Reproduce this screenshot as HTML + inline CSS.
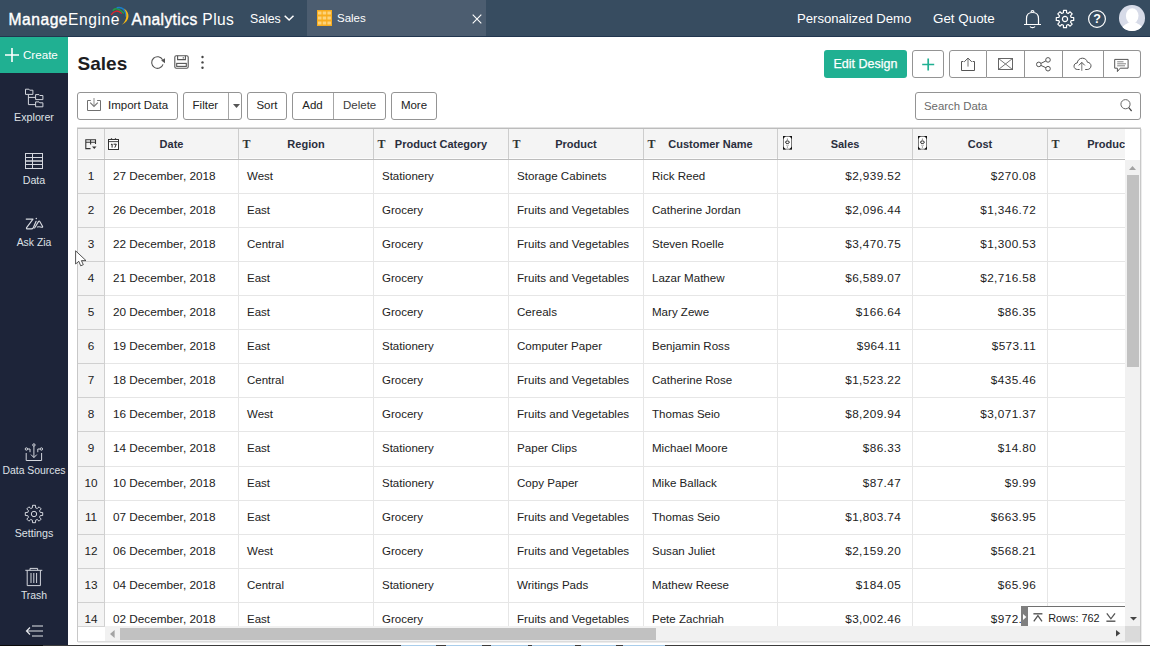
<!DOCTYPE html>
<html>
<head>
<meta charset="utf-8">
<title>Sales</title>
<style>
*{box-sizing:border-box;margin:0;padding:0}
html,body{width:1150px;height:646px;overflow:hidden;background:#fff;font-family:"Liberation Sans",sans-serif;color:#222;}
body{position:relative}
.abs{position:absolute}
svg{display:block;overflow:visible}
#topbar{position:absolute;left:0;top:0;width:1150px;height:37px;background:#374c60;border-bottom:1px solid #22364f}
#topbar .t{position:absolute;color:#fff;white-space:nowrap}
.sb{-webkit-text-stroke:.4px #fff}
#tab{position:absolute;left:307px;top:0;width:179px;height:36px;background:#4c5d70;}
#side{position:absolute;left:0;top:37px;width:68px;height:609px;background:#1d2439;}
#create{position:absolute;left:0;top:0;width:68px;height:36px;background:#20b092;color:#fff;}
.nav{position:absolute;left:0;width:68px;text-align:center;color:#dfe1e6;font-size:10.7px;white-space:nowrap;line-height:12px}
.sico{position:absolute}
.btn{position:absolute;top:92px;height:28px;border:1px solid #949494;border-radius:3px;background:#fff;font-size:11.5px;color:#222;line-height:25px;text-align:center;white-space:nowrap}
.ibtn{position:absolute;top:50px;height:28px;border:1px solid #949494;background:#fff;}
#grid{position:absolute;left:77px;top:128px;width:1064px;height:514px;border:1px solid #c8c8c8;border-top-color:#bcbcbc;border-bottom-color:#dcdcdc;background:#fff;box-shadow:1px 1px 0 #ececec,0 -1px 0 #e0e0e0}
#gin{position:absolute;left:0;top:0;width:1047px;height:497px;overflow:hidden}
.hrow{position:absolute;left:0;top:0;height:31px;width:1048px;background:#f4f4f4;border-bottom:1px solid #bcbcbc;box-shadow:inset 0 -1px 0 #fcfcfc}
.hc{position:absolute;top:0;height:30px;border-right:1px solid #cdcdcd;font-weight:bold;font-size:11px;line-height:30px;text-align:center;color:#2a2e3d;white-space:nowrap;overflow:hidden}
.hc .ti{position:absolute;left:3.5px;top:0;font-family:"Liberation Serif",serif;font-weight:bold;font-size:12px;color:#333}
.hc .hi{position:absolute}
.row{position:absolute;left:0;width:1048px;border-bottom:1px solid #e6e6e6;font-size:11.75px;line-height:32px;color:#222;background:#fff}
.c{position:absolute;top:0;bottom:0;border-right:1px solid #e6e6e6;white-space:nowrap;overflow:hidden}
.c.n{left:0;width:27px;background:#f4f4f4;text-align:center;border-right:1px solid #d0d0d0;bottom:-1px;border-bottom:1px solid #d0d0d0}
.c.l{padding-left:8px}
.c.r{text-align:right;padding-right:10.9px;letter-spacing:.4px}
</style>
</head>
<body>
<div id="topbar">
  <div class="t" style="left:8.4px;top:11.4px;font-size:15.6px;line-height:18px;letter-spacing:.56px"><span class="sb">Manage</span>Engine</div>
  <svg class="abs" style="left:110px;top:6px" width="20" height="20" viewBox="0 0 20 20" fill="none">
    <path d="M1.1 8.8Q6 2.1 11.7 7.4" stroke="#e0242b" stroke-width="1.4"/>
    <path d="M2.8 4.6Q6.2 -.3 14 7.6" stroke="#21a046" stroke-width="1.4"/>
    <path d="M6.7 1.8C12 .2 16 4 16.2 10.7" stroke="#1b7fc8" stroke-width="1.5"/>
    <path d="M14 2.4C20.8 7 19.8 15 11.7 18.8C16.8 14.5 18 8 14 2.4Z" fill="#f6b915"/>
  </svg>
  <div class="t" style="left:131.6px;top:11.4px;font-size:15.6px;line-height:18px;letter-spacing:.4px"><span class="sb">Analytics</span> Plus</div>
  <div class="t" style="left:250px;top:10px;font-size:12.3px;line-height:18px;">Sales</div>
  <svg class="abs" style="left:284px;top:15px" width="11" height="7" viewBox="0 0 11 7" fill="none"><path d="M0.7 0.8 L5.1 5 L9.5 0.8" stroke="#fff" stroke-width="1.5"/></svg>
  <div id="tab">
    <svg class="abs" style="left:10px;top:10px" width="15" height="16" viewBox="0 0 15 16"><rect width="15" height="16" fill="#f8ac1e"/><g fill="#fcd37c"><rect x="1" y="1.5" width="3.5" height="3"/><rect x="5.7" y="1.5" width="3.5" height="3"/><rect x="10.4" y="1.5" width="3.5" height="3"/><rect x="1" y="6.5" width="3.5" height="3"/><rect x="5.7" y="6.5" width="3.5" height="3"/><rect x="10.4" y="6.5" width="3.5" height="3"/><rect x="1" y="11.5" width="3.5" height="3"/><rect x="5.7" y="11.5" width="3.5" height="3"/><rect x="10.4" y="11.5" width="3.5" height="3"/></g></svg>
    <div class="t" style="left:30px;top:10px;font-size:11.5px;line-height:16px;">Sales</div>
    <svg class="abs" style="left:165px;top:14px" width="10" height="10" viewBox="0 0 10 10"><path d="M0.7 0.7L9.3 9.3M9.3 0.7L0.7 9.3" stroke="#fff" stroke-width="1.1"/></svg>
  </div>
  <div class="t" style="left:797px;top:10px;font-size:13.1px;line-height:18px;">Personalized Demo</div>
  <div class="t" style="left:933px;top:10px;font-size:13.4px;line-height:18px;">Get Quote</div>
  <!-- bell -->
  <svg class="abs" style="left:1023px;top:9px" width="19" height="20" viewBox="0 0 19 20" fill="none" stroke="#fff" stroke-width="1.2"><path d="M1 15.5 H18 M3.5 15.5 V9.5 C3.5 5.5 6 3.5 9.5 3.5 C13 3.5 15.5 5.5 15.5 9.5 V15.5"/><path d="M8 3.4 C8 1 11 1 11 3.4"/><path d="M7 17.5 C8 19 11 19 12 17.5"/></svg>
  <!-- gear -->
  <svg class="abs" style="left:1056px;top:10px" width="18" height="18" viewBox="-9 -9 18 18" fill="none" stroke="#fff" stroke-width="1.2"><path stroke-linejoin="round" d="M-1.6,-6.2 L-1.5,-8.7 L1.5,-8.7 L1.6,-6.2 L3.2,-5.5 L5.1,-7.2 L7.2,-5.1 L5.5,-3.2 L6.2,-1.6 L8.7,-1.5 L8.7,1.5 L6.2,1.6 L5.5,3.2 L7.2,5.1 L5.1,7.2 L3.2,5.5 L1.6,6.2 L1.5,8.7 L-1.5,8.7 L-1.6,6.2 L-3.2,5.5 L-5.1,7.2 L-7.2,5.1 L-5.5,3.2 L-6.2,1.6 L-8.7,1.5 L-8.7,-1.5 L-6.2,-1.6 L-5.5,-3.2 L-7.2,-5.1 L-5.1,-7.2 L-3.2,-5.5 Z"/><circle r="2.6"/></svg>
  <!-- help -->
  <svg class="abs" style="left:1088px;top:10px" width="18" height="18" viewBox="0 0 18 18" fill="none"><circle cx="9" cy="9" r="8.4" stroke="#fff" stroke-width="1.2"/><text x="9" y="13.3" font-family="Liberation Sans" font-weight="bold" font-size="12.5" fill="#fff" text-anchor="middle">?</text></svg>
  <!-- avatar -->
  <div class="abs" style="left:1119.4px;top:5px;width:25.6px;height:25.6px;border-radius:50%;overflow:hidden;background:#d7dbe8"><svg class="abs" style="left:0;top:0" width="26" height="26" viewBox="0 0 26 26"><g fill="#fff"><ellipse cx="13.2" cy="10.8" rx="6.3" ry="7.6"/><path d="M2 27C2 20.5 7 19.6 9.6 17.5H17C19.6 19.6 24.6 20.5 24.6 27z"/></g></svg></div>
</div>

<div id="side">
  <div id="create">
    <svg class="abs" style="left:5px;top:11px" width="14" height="14" viewBox="0 0 14 14"><path d="M7 0V14M0 7H14" stroke="#fff" stroke-width="1.6"/></svg>
    <span class="abs" style="left:23px;top:11px;font-size:11.6px;line-height:14px">Create</span>
  </div>
</div>
<!-- sidebar icons in page coords -->
<!-- explorer -->
<svg class="abs" style="left:24px;top:88px" width="20" height="20" viewBox="0 0 20 20" fill="none" stroke="#d3d6dd" stroke-width="1"><path d="M1.5 6.4V1.2H4.9L5.7 2.2H8.9V6.4Z" stroke-linejoin="round"/><path d="M11.6 11.6V6.6H15L15.8 7.5H18.9V11.6Z" stroke-linejoin="round"/><path d="M11.6 18.8V13.9H15L15.8 14.8H18.9V18.8Z" stroke-linejoin="round"/><path d="M4.4 6.4V16.6H11.6M4.4 9.4H11.6"/></svg>
<div class="nav" style="top:110.6px">Explorer</div>
<!-- data -->
<svg class="abs" style="left:24px;top:152px" width="20" height="18" viewBox="0 0 20 18" fill="none" stroke="#d3d6dd" stroke-width="1"><rect x="1.5" y="1.5" width="17" height="15"/><path d="M8.5 1.5V16.5M1.5 5.5H18.5M1.5 12.5H18.5"/><path d="M1.5 9H18.5" stroke-width="1.5"/></svg>
<div class="nav" style="top:174px">Data</div>
<!-- zia -->
<svg class="abs" style="left:24px;top:215px" width="20" height="16" viewBox="0 0 20 16" fill="none" stroke="#d8dbe1" stroke-width="1.15" stroke-linecap="round" stroke-linejoin="round"><path d="M2.2 4.1H9L2.6 12.6Q2 13.9 3.6 13.9H7.4Q8.6 13.9 9.4 12.6L12.1 6.3"/><path d="M10.6 13L14.6 6.4Q15.2 5.6 15.8 6.5L18.5 11.2Q19 12.4 17.8 12.2Q15 11.4 13.4 12"/><circle cx="12.3" cy="3.5" r=".75" fill="#d3d6dd" stroke="none"/></svg>
<div class="nav" style="top:237px;font-size:10.4px">Ask Zia</div>
<!-- data sources -->
<svg class="abs" style="left:24px;top:442.7px" width="20" height="19" viewBox="0 0 20 19" fill="none" stroke="#d3d6dd" stroke-width="1"><path d="M2.2 10V17.5H17.6V10"/><path d="M9.9 3.2V14.4M7 11.6L9.9 14.6L12.8 11.6"/><circle cx="9.9" cy="2" r="1.2"/><circle cx="2.4" cy="6" r="1.2"/><circle cx="17.4" cy="6" r="1.2"/><path d="M3.6 6H6V9.2M16.2 6H13.8V9.2"/></svg>
<div class="nav" style="top:464.5px;font-size:10.4px">Data Sources</div>
<!-- settings -->
<svg class="abs" style="left:24.8px;top:505.2px" width="18" height="18" viewBox="-9 -9 18 18" fill="none" stroke="#d3d6dd" stroke-width="1"><path stroke-linejoin="round" d="M-1.6,-6.2 L-1.5,-8.7 L1.5,-8.7 L1.6,-6.2 L3.2,-5.5 L5.1,-7.2 L7.2,-5.1 L5.5,-3.2 L6.2,-1.6 L8.7,-1.5 L8.7,1.5 L6.2,1.6 L5.5,3.2 L7.2,5.1 L5.1,7.2 L3.2,5.5 L1.6,6.2 L1.5,8.7 L-1.5,8.7 L-1.6,6.2 L-3.2,5.5 L-5.1,7.2 L-7.2,5.1 L-5.5,3.2 L-6.2,1.6 L-8.7,1.5 L-8.7,-1.5 L-6.2,-1.6 L-5.5,-3.2 L-7.2,-5.1 L-5.1,-7.2 L-3.2,-5.5 Z"/><circle r="2.7"/></svg>
<div class="nav" style="top:526.7px">Settings</div>
<!-- trash -->
<svg class="abs" style="left:24px;top:567px" width="20" height="20" viewBox="0 0 20 20" fill="none" stroke="#d3d6dd" stroke-width="1"><path d="M1.3 3.3H18.3M6 3.3V1.4H13.6V3.3M3.2 3.3V18.6H16.4V3.3M7 6V16M9.8 6V16M12.6 6V16"/></svg>
<div class="nav" style="top:590px;font-size:10.4px">Trash</div>
<!-- collapse -->
<svg class="abs" style="left:25px;top:624px" width="19" height="14" viewBox="0 0 19 14" fill="none" stroke="#e3e5ea" stroke-width="1.2"><path d="M7 2H18M1.5 7H18M7 12H18M5 3.5L1.5 7L5 10.5"/></svg>

<!-- title -->
<div class="abs" style="left:77.6px;top:53px;font-size:19px;line-height:22px;font-weight:bold;color:#1d1d1f">Sales</div>
<!-- refresh -->
<svg class="abs" style="left:150px;top:55px" width="16" height="15" viewBox="0 0 16 15" fill="none" stroke="#555" stroke-width="1.1"><path d="M12.6 4.8A5.8 5.8 0 1 0 13 9.3"/><path d="M11.2 5.4L15 3.2V8.2Z" fill="#555" stroke="none"/></svg>
<!-- save -->
<svg class="abs" style="left:174px;top:55px" width="15" height="14" viewBox="0 0 15 14" fill="none" stroke="#555" stroke-width="1.1"><path d="M.8 2.3C.8 1.4 1.4.8 2.3.8H12.7C13.6.8 14.2 1.4 14.2 2.3V11.7C14.2 12.6 13.6 13.2 12.7 13.2H2.3C1.4 13.2.8 12.6.8 11.7Z"/><path d="M3.6.8V4.6H11.4V.8"/><rect x="2.7" y="8.4" width="9.6" height="3"/><path d="M9.3 2.2V3.4" stroke-width="1.2"/></svg>
<!-- dots -->
<svg class="abs" style="left:200px;top:55px" width="5" height="15" viewBox="0 0 5 15"><circle cx="2.5" cy="2" r="1.2" fill="#444"/><circle cx="2.5" cy="7.4" r="1.2" fill="#444"/><circle cx="2.5" cy="12.8" r="1.2" fill="#444"/></svg>

<!-- toolbar -->
<div class="btn" style="left:77px;width:101px;text-align:left;padding-left:30px">Import Data
  <svg class="abs" style="left:9px;top:5px" width="15" height="14" viewBox="0 0 15 14" fill="none" stroke="#666" stroke-width="1"><path d="M3.8 2.5H.5V12.5H13.5V2.5H10.1" stroke="#707070"/><path d="M7 0V8" stroke="#a0a0a0" stroke-width="1.2"/><path d="M3.2 4.6L7 8.5L10.8 4.6" stroke="#777" stroke-width="1.2"/></svg>
</div>
<div class="btn" style="left:183px;width:59px;text-align:left;padding-left:8.6px">Filter<div class="abs" style="left:44px;top:0;width:1px;height:26px;background:#a6a6a6"></div><svg class="abs" style="left:48.5px;top:10.5px" width="7" height="4" viewBox="0 0 7 4"><path d="M0 0H7L3.5 4Z" fill="#555"/></svg></div>
<div class="btn" style="left:247px;width:40px">Sort</div>
<div class="btn" style="left:292px;width:94px;text-align:left;padding-left:9.3px">Add<div class="abs" style="left:40px;top:0;width:1px;height:26px;background:#a6a6a6"></div><span class="abs" style="left:50px;top:0;color:#3c3c3c">Delete</span></div>
<div class="btn" style="left:391px;width:46px">More</div>

<!-- right buttons -->
<div class="abs" style="left:824px;top:50px;width:83px;height:28px;background:#20b092;border-radius:3px;color:#fff;font-size:12.5px;line-height:28.6px;text-align:center;white-space:nowrap;-webkit-text-stroke:.25px #fff">Edit Design</div>
<div class="ibtn" style="left:912px;width:32px;border-radius:3px"><svg class="abs" style="left:9px;top:7px" width="13" height="13" viewBox="0 0 13 13"><path d="M6.2 .5V12.5M.2 6.5H12.2" stroke="#20b092" stroke-width="1.7"/></svg></div>
<div class="ibtn" style="left:949px;width:38px;border-radius:3px 0 0 3px"><svg class="abs" style="left:10px;top:6px" width="17" height="16" viewBox="0 0 17 16" fill="none" stroke="#555" stroke-width="1"><path d="M3.4 4.5H1.5V13.5H14.5V4.5H12.6"/><path d="M8 9.6V1.2" stroke="#777"/><path d="M4.2 4.9L8 1.1L11.8 4.9"/></svg></div>
<div class="ibtn" style="left:987px;width:38px;border-left:none"><svg class="abs" style="left:11px;top:7px" width="17" height="13" viewBox="0 0 17 13" fill="none" stroke="#666" stroke-width="1"><rect x=".5" y=".5" width="14" height="11"/><path d="M.5 .5L14.5 11.5M14.5 .5L.5 11.5" stroke-width=".9"/></svg></div>
<div class="ibtn" style="left:1025px;width:38px;border-left:none"><svg class="abs" style="left:11px;top:6px" width="15" height="15" viewBox="0 0 15 15" fill="none" stroke="#555" stroke-width="1"><circle cx="12" cy="2.9" r="2.3"/><circle cx="2.8" cy="7.4" r="2.3"/><circle cx="12" cy="11.7" r="2.3"/><path d="M4.9 6.4L9.9 3.9M4.9 8.4L9.9 10.7"/></svg></div>
<div class="ibtn" style="left:1063px;width:41px;border-left:none"><svg class="abs" style="left:10px;top:6px" width="20" height="15" viewBox="0 0 20 15" fill="none" stroke="#555" stroke-width="1"><path d="M6.6 12.5H4.6C2.4 12.5 1 11 1 9.2C1 7.4 2.4 6 4.2 6C4.6 3.2 6.6 1.2 9.4 1.2C12 1.2 13.8 2.8 14.4 5.2C16.6 5.4 18 7 18 8.8C18 10.9 16.4 12.5 14.2 12.5H12.2"/><path d="M8.8 13.8V5.4" stroke="#777"/><path d="M5.8 8.4L8.8 5.4L11.8 8.4"/></svg></div>
<div class="ibtn" style="left:1104px;width:37px;border-radius:0 3px 3px 0;border-left:none"><svg class="abs" style="left:10px;top:7px" width="16" height="15" viewBox="0 0 16 15" fill="none" stroke="#555" stroke-width="1"><path d="M.7 1.4H14.1V10.2H6.2L3.4 13.6V10.2H.7Z"/><path d="M3.2 3.8H9.5M3.2 5.8H12M3.2 7.8H11" stroke="#777" stroke-width=".9"/></svg></div>

<!-- search -->
<div class="abs" style="left:915px;top:92px;width:226px;height:28px;border:1px solid #949494;border-radius:3px;background:#fff">
  <div class="abs" style="left:8px;top:.8px;font-size:11.4px;line-height:25px;color:#6a6a6a">Search Data</div>
  <svg class="abs" style="left:203.5px;top:6px" width="13" height="13" viewBox="0 0 13 13" fill="none" stroke="#666" stroke-width="1"><circle cx="5.5" cy="5.2" r="4.6"/><path d="M8.8 8.6L11.6 12" stroke="#444" stroke-width="1.2"/></svg>
</div>

<!-- grid -->
<div id="grid">
 <div id="gin">
<div class="row" style="top:31px;height:34px"><div class="c n">1</div><div class="c l" style="left:27px;width:134px">27 December, 2018</div><div class="c l" style="left:161px;width:135px;font-size:11.5px">West</div><div class="c l" style="left:296px;width:135px;font-size:11.5px">Stationery</div><div class="c l" style="left:431px;width:135px;font-size:11.6px">Storage Cabinets</div><div class="c l" style="left:566px;width:134px;font-size:11.55px">Rick Reed</div><div class="c r" style="left:700px;width:135px">$2,939.52</div><div class="c r" style="left:835px;width:135px">$270.08</div><div class="c l" style="left:970px;width:135px"></div></div>
<div class="row" style="top:65px;height:34px"><div class="c n">2</div><div class="c l" style="left:27px;width:134px">26 December, 2018</div><div class="c l" style="left:161px;width:135px;font-size:11.5px">East</div><div class="c l" style="left:296px;width:135px;font-size:11.5px">Grocery</div><div class="c l" style="left:431px;width:135px;font-size:11.6px">Fruits and Vegetables</div><div class="c l" style="left:566px;width:134px;font-size:11.55px">Catherine Jordan</div><div class="c r" style="left:700px;width:135px">$2,096.44</div><div class="c r" style="left:835px;width:135px">$1,346.72</div><div class="c l" style="left:970px;width:135px"></div></div>
<div class="row" style="top:99px;height:34px"><div class="c n">3</div><div class="c l" style="left:27px;width:134px">22 December, 2018</div><div class="c l" style="left:161px;width:135px;font-size:11.5px">Central</div><div class="c l" style="left:296px;width:135px;font-size:11.5px">Grocery</div><div class="c l" style="left:431px;width:135px;font-size:11.6px">Fruits and Vegetables</div><div class="c l" style="left:566px;width:134px;font-size:11.55px">Steven Roelle</div><div class="c r" style="left:700px;width:135px">$3,470.75</div><div class="c r" style="left:835px;width:135px">$1,300.53</div><div class="c l" style="left:970px;width:135px"></div></div>
<div class="row" style="top:133px;height:34px"><div class="c n">4</div><div class="c l" style="left:27px;width:134px">21 December, 2018</div><div class="c l" style="left:161px;width:135px;font-size:11.5px">East</div><div class="c l" style="left:296px;width:135px;font-size:11.5px">Grocery</div><div class="c l" style="left:431px;width:135px;font-size:11.6px">Fruits and Vegetables</div><div class="c l" style="left:566px;width:134px;font-size:11.55px">Lazar Mathew</div><div class="c r" style="left:700px;width:135px">$6,589.07</div><div class="c r" style="left:835px;width:135px">$2,716.58</div><div class="c l" style="left:970px;width:135px"></div></div>
<div class="row" style="top:167px;height:34px"><div class="c n">5</div><div class="c l" style="left:27px;width:134px">20 December, 2018</div><div class="c l" style="left:161px;width:135px;font-size:11.5px">East</div><div class="c l" style="left:296px;width:135px;font-size:11.5px">Grocery</div><div class="c l" style="left:431px;width:135px;font-size:11.6px">Cereals</div><div class="c l" style="left:566px;width:134px;font-size:11.55px">Mary Zewe</div><div class="c r" style="left:700px;width:135px">$166.64</div><div class="c r" style="left:835px;width:135px">$86.35</div><div class="c l" style="left:970px;width:135px"></div></div>
<div class="row" style="top:201px;height:34px"><div class="c n">6</div><div class="c l" style="left:27px;width:134px">19 December, 2018</div><div class="c l" style="left:161px;width:135px;font-size:11.5px">East</div><div class="c l" style="left:296px;width:135px;font-size:11.5px">Stationery</div><div class="c l" style="left:431px;width:135px;font-size:11.6px">Computer Paper</div><div class="c l" style="left:566px;width:134px;font-size:11.55px">Benjamin Ross</div><div class="c r" style="left:700px;width:135px">$964.11</div><div class="c r" style="left:835px;width:135px">$573.11</div><div class="c l" style="left:970px;width:135px"></div></div>
<div class="row" style="top:235px;height:34px"><div class="c n">7</div><div class="c l" style="left:27px;width:134px">18 December, 2018</div><div class="c l" style="left:161px;width:135px;font-size:11.5px">Central</div><div class="c l" style="left:296px;width:135px;font-size:11.5px">Grocery</div><div class="c l" style="left:431px;width:135px;font-size:11.6px">Fruits and Vegetables</div><div class="c l" style="left:566px;width:134px;font-size:11.55px">Catherine Rose</div><div class="c r" style="left:700px;width:135px">$1,523.22</div><div class="c r" style="left:835px;width:135px">$435.46</div><div class="c l" style="left:970px;width:135px"></div></div>
<div class="row" style="top:269px;height:34px"><div class="c n">8</div><div class="c l" style="left:27px;width:134px">16 December, 2018</div><div class="c l" style="left:161px;width:135px;font-size:11.5px">West</div><div class="c l" style="left:296px;width:135px;font-size:11.5px">Grocery</div><div class="c l" style="left:431px;width:135px;font-size:11.6px">Fruits and Vegetables</div><div class="c l" style="left:566px;width:134px;font-size:11.55px">Thomas Seio</div><div class="c r" style="left:700px;width:135px">$8,209.94</div><div class="c r" style="left:835px;width:135px">$3,071.37</div><div class="c l" style="left:970px;width:135px"></div></div>
<div class="row" style="top:303px;height:35px"><div class="c n">9</div><div class="c l" style="left:27px;width:134px">14 December, 2018</div><div class="c l" style="left:161px;width:135px;font-size:11.5px">East</div><div class="c l" style="left:296px;width:135px;font-size:11.5px">Stationery</div><div class="c l" style="left:431px;width:135px;font-size:11.6px">Paper Clips</div><div class="c l" style="left:566px;width:134px;font-size:11.55px">Michael Moore</div><div class="c r" style="left:700px;width:135px">$86.33</div><div class="c r" style="left:835px;width:135px">$14.80</div><div class="c l" style="left:970px;width:135px"></div></div>
<div class="row" style="top:338px;height:34px"><div class="c n">10</div><div class="c l" style="left:27px;width:134px">10 December, 2018</div><div class="c l" style="left:161px;width:135px;font-size:11.5px">East</div><div class="c l" style="left:296px;width:135px;font-size:11.5px">Stationery</div><div class="c l" style="left:431px;width:135px;font-size:11.6px">Copy Paper</div><div class="c l" style="left:566px;width:134px;font-size:11.55px">Mike Ballack</div><div class="c r" style="left:700px;width:135px">$87.47</div><div class="c r" style="left:835px;width:135px">$9.99</div><div class="c l" style="left:970px;width:135px"></div></div>
<div class="row" style="top:372px;height:34px"><div class="c n">11</div><div class="c l" style="left:27px;width:134px">07 December, 2018</div><div class="c l" style="left:161px;width:135px;font-size:11.5px">East</div><div class="c l" style="left:296px;width:135px;font-size:11.5px">Grocery</div><div class="c l" style="left:431px;width:135px;font-size:11.6px">Fruits and Vegetables</div><div class="c l" style="left:566px;width:134px;font-size:11.55px">Thomas Seio</div><div class="c r" style="left:700px;width:135px">$1,803.74</div><div class="c r" style="left:835px;width:135px">$663.95</div><div class="c l" style="left:970px;width:135px"></div></div>
<div class="row" style="top:406px;height:34px"><div class="c n">12</div><div class="c l" style="left:27px;width:134px">06 December, 2018</div><div class="c l" style="left:161px;width:135px;font-size:11.5px">West</div><div class="c l" style="left:296px;width:135px;font-size:11.5px">Grocery</div><div class="c l" style="left:431px;width:135px;font-size:11.6px">Fruits and Vegetables</div><div class="c l" style="left:566px;width:134px;font-size:11.55px">Susan Juliet</div><div class="c r" style="left:700px;width:135px">$2,159.20</div><div class="c r" style="left:835px;width:135px">$568.21</div><div class="c l" style="left:970px;width:135px"></div></div>
<div class="row" style="top:440px;height:34px"><div class="c n">13</div><div class="c l" style="left:27px;width:134px">04 December, 2018</div><div class="c l" style="left:161px;width:135px;font-size:11.5px">Central</div><div class="c l" style="left:296px;width:135px;font-size:11.5px">Stationery</div><div class="c l" style="left:431px;width:135px;font-size:11.6px">Writings Pads</div><div class="c l" style="left:566px;width:134px;font-size:11.55px">Mathew Reese</div><div class="c r" style="left:700px;width:135px">$184.05</div><div class="c r" style="left:835px;width:135px">$65.96</div><div class="c l" style="left:970px;width:135px"></div></div>
<div class="row" style="top:474px;height:34px"><div class="c n">14</div><div class="c l" style="left:27px;width:134px">02 December, 2018</div><div class="c l" style="left:161px;width:135px;font-size:11.5px">East</div><div class="c l" style="left:296px;width:135px;font-size:11.5px">Grocery</div><div class="c l" style="left:431px;width:135px;font-size:11.6px">Fruits and Vegetables</div><div class="c l" style="left:566px;width:134px;font-size:11.55px">Pete Zachriah</div><div class="c r" style="left:700px;width:135px">$3,002.46</div><div class="c r" style="left:835px;width:135px">$972.18</div><div class="c l" style="left:970px;width:135px"></div></div>
  <div class="hrow"><div class="hc" style="left:0;width:27px"><svg class="hi" style="left:7px;top:10px" width="12" height="11" viewBox="0 0 12 11" fill="none" stroke="#333" stroke-width="1.1"><path d="M10.5 5V.8H.8V9.6H5.5M.8 3.2H10.5M5.6 .8V5.5"/><path d="M7 7.5H11.5L9.25 10Z" fill="#333" stroke="none"/></svg></div>
<div class="hc" style="left:27px;width:134px"><svg class="hi" style="left:3px;top:9px" width="12" height="13" viewBox="0 0 12 13"><rect x=".5" y="1.5" width="10" height="10" fill="#fff" stroke="#333" stroke-width="1"/><path d="M.5 3.6H10.5" stroke="#333" stroke-width=".9"/><path d="M3.5 .2V1.5M7.5 .2V1.5" stroke="#333" stroke-width="1.2"/><path d="M2.9 6.6L4.1 6V9.6M5.6 6.2H8.3L6.8 9.6" fill="none" stroke="#222" stroke-width="1"/></svg>Date</div>
<div class="hc" style="left:161px;width:135px"><span class="ti">T</span>Region</div>
<div class="hc" style="left:296px;width:135px"><span class="ti">T</span>Product Category</div>
<div class="hc" style="left:431px;width:135px"><span class="ti">T</span>Product</div>
<div class="hc" style="left:566px;width:134px"><span class="ti">T</span>Customer Name</div>
<div class="hc" style="left:700px;width:135px"><svg class="hi" style="left:5px;top:7.4px" width="9" height="13.5" viewBox="0 0 9 13.5"><rect x=".4" y=".4" width="8.2" height="12.7" fill="#fff" stroke="#5a5a5a" stroke-width=".8"/><path d="M0 0h2.9L0 2.9zM9 0H6.1L9 2.9zM0 13.5h2.9L0 10.6zM9 13.5H6.1L9 10.6z" fill="#111"/><ellipse cx="4.4" cy="6.2" rx="1.9" ry="1.3" fill="#fff" stroke="#1a1a1a" stroke-width=".95"/><path d="M3 9.2h3" stroke="#999" stroke-width=".7"/><path d="M4.4 2.7v.9M4.4 10.6v.9" stroke="#333" stroke-width=".9"/></svg>Sales</div>
<div class="hc" style="left:835px;width:135px"><svg class="hi" style="left:5px;top:7.4px" width="9" height="13.5" viewBox="0 0 9 13.5"><rect x=".4" y=".4" width="8.2" height="12.7" fill="#fff" stroke="#5a5a5a" stroke-width=".8"/><path d="M0 0h2.9L0 2.9zM9 0H6.1L9 2.9zM0 13.5h2.9L0 10.6zM9 13.5H6.1L9 10.6z" fill="#111"/><ellipse cx="4.4" cy="6.2" rx="1.9" ry="1.3" fill="#fff" stroke="#1a1a1a" stroke-width=".95"/><path d="M3 9.2h3" stroke="#999" stroke-width=".7"/><path d="M4.4 2.7v.9M4.4 10.6v.9" stroke="#333" stroke-width=".9"/></svg>Cost</div>
<div class="hc" style="left:970px;width:135px"><span class="ti">T</span>Product ID</div>
  </div>
 </div>
 <!-- vertical scrollbar -->
 <div class="abs" style="left:1047px;top:0;width:15px;height:31px;background:#fff"></div>
 <div class="abs" style="left:1047px;top:31px;width:15px;height:466px;background:#f1f1f1"></div>
 <svg class="abs" style="left:1051px;top:37px" width="7" height="4" viewBox="0 0 7 4"><path d="M0 4H7L3.5 0Z" fill="#a3a3a3"/></svg>
 <div class="abs" style="left:1049px;top:46px;width:12px;height:192px;background:#c1c1c1"></div>
 <svg class="abs" style="left:1051.5px;top:488px" width="7" height="4" viewBox="0 0 7 4"><path d="M0 0H7L3.5 3.6Z" fill="#444"/></svg>
 <!-- horizontal scrollbar -->
 <div class="abs" style="left:0;top:497px;width:27px;height:15px;background:#fff;border-top:1px solid #d4d4d4"></div>
 <div class="abs" style="left:27px;top:497px;width:1020px;height:15px;background:#f1f1f1"></div>
 <svg class="abs" style="left:32px;top:500.5px" width="5" height="8" viewBox="0 0 5 8"><path d="M4.6 0V8L0 4Z" fill="#a3a3a3"/></svg>
 <div class="abs" style="left:42px;top:498.5px;width:536px;height:12px;background:#c1c1c1"></div>
 <svg class="abs" style="left:1038px;top:501.4px" width="5" height="7" viewBox="0 0 5 7"><path d="M0 0V6.6L4.3 3.3Z" fill="#444"/></svg>
 <div class="abs" style="left:1047px;top:497px;width:15px;height:15px;background:#dadada"></div>
 <!-- rows panel -->
 <div class="abs" style="left:943px;top:477px;width:7px;height:20px;background:#7f7f7f"><svg class="abs" style="left:2px;top:7.7px" width="4" height="6" viewBox="0 0 4 6"><path d="M0 0V6L3.4 3Z" fill="#fff"/></svg></div>
 <div class="abs" style="left:950px;top:477px;width:97px;height:20px;background:#fff;border-top:1px solid #707070">
   <svg class="abs" style="left:4.6px;top:6.4px" width="10" height="10" viewBox="0 0 10 10" fill="none" stroke="#555" stroke-width="1.4"><path d="M.4 .8H9.4"/><path d="M.8 8.4L4.9 2.6L9 8.4" stroke-width="1.3"/></svg>
   <div class="abs" style="left:20.2px;top:1.6px;font-size:10.9px;line-height:19px;color:#222;white-space:nowrap">Rows: 762</div>
   <svg class="abs" style="left:77.6px;top:6.4px" width="10" height="10" viewBox="0 0 10 10" fill="none" stroke="#555" stroke-width="1.4"><path d="M.4 8.2H9.4"/><path d="M.8 .4L4.9 5.8L9 .4" stroke-width="1.3"/></svg>
 </div>
</div>
<!-- mouse cursor -->
<svg class="abs" style="left:74.5px;top:249.8px;z-index:50" width="13" height="18" viewBox="0 0 13 18"><path d="M.6 .8V14L3.8 11.3L5.7 15.8L8.3 14.7L6.4 10.6H11Z" fill="#fff" stroke="#2a2a2a" stroke-width=".8" stroke-linejoin="miter"/></svg>
<!-- bottom strip -->
<div class="abs" style="left:0;top:645px;width:43px;height:1px;background:#0a0a0a"></div>
<div class="abs" style="left:43px;top:645px;width:1107px;height:1px;background:#3c3c3c"></div>
<div class="abs" style="left:401px;top:645px;width:35px;height:1px;background:#a9cdea"></div>
<div class="abs" style="left:446px;top:645px;width:36px;height:1px;background:#a9cdea"></div>
<div class="abs" style="left:491px;top:645px;width:37px;height:1px;background:#a9cdea"></div>
<div class="abs" style="left:532px;top:645px;width:43px;height:1px;background:#a9cdea"></div>
<div class="abs" style="left:581px;top:645px;width:35px;height:1px;background:#a9cdea"></div>
<div class="abs" style="left:623px;top:645px;width:42px;height:1px;background:#a9cdea"></div>
</body>
</html>
